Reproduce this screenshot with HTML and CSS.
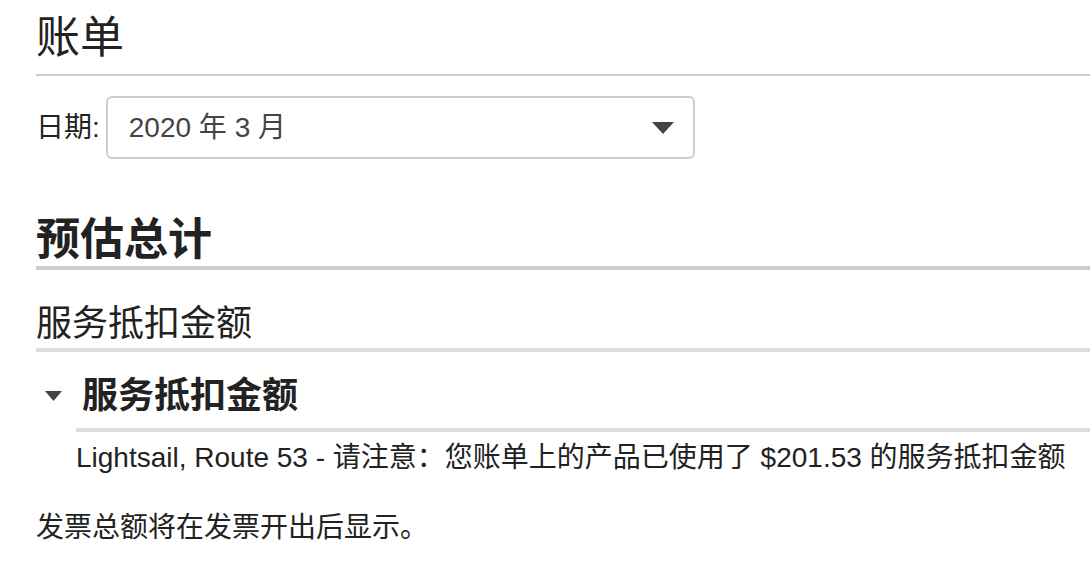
FILE: index.html
```html
<!DOCTYPE html>
<html lang="zh-CN">
<head>
  <meta charset="UTF-8">
  <meta name="viewport" content="width=device-width, initial-scale=1.0">
  <title>账单</title>
  <link rel="stylesheet" href="styles.css">
</head>
<body>
  <div class="page">
    <h1 class="page-title">账单</h1>

    <div class="date-row">
      <label class="date-label" for="period">日期:</label>
      <div class="select">
        <span class="select-value">2020 年 3 月</span>
        <svg class="select-arrow" width="22" height="12" viewBox="0 0 22 12">
          <polygon points="0,0 22,0 11,12" fill="#444"/>
        </svg>
      </div>
    </div>

    <h2 class="total-title">预估总计</h2>

    <h3 class="sub-title">服务抵扣金额</h3>

    <div class="expander">
      <div class="expander-head">
        <span class="caret">
          <svg width="17" height="10" viewBox="0 0 17 10">
            <polygon points="0,0 17,0 8.5,10" fill="#444"/>
          </svg>
        </span>
        <h4 class="expander-title">服务抵扣金额</h4>
      </div>
      <p class="expander-body">Lightsail, Route 53 - 请注意：您账单上的产品已使用了 $201.53 的服务抵扣金额</p>
    </div>

    <p class="note">发票总额将在发票开出后显示。</p>
  </div>
</body>
</html>
```

FILE: styles.css
```css
body {
  margin: 0;
  background: #fff;
  color: #222;
  font-family: "Liberation Sans", "Noto Sans CJK SC", sans-serif;
  font-size: 28px;
}
.page {
  padding: 12px 0 0 36px;
}
h1, h2, h3, h4, p {
  margin: 0;
}
.page-title {
  font-size: 44px;
  font-weight: normal;
  line-height: 52px;
  padding-bottom: 10px;
  border-bottom: 2px solid #ccc;
}
.date-row {
  display: flex;
  align-items: center;
  gap: 6px;
  margin-top: 20px;
}
.date-label {
  line-height: 36px;
}
.select {
  display: flex;
  align-items: center;
  justify-content: space-between;
  box-sizing: border-box;
  width: 589px;
  height: 63px;
  padding: 0 19px 0 21px;
  border: 2px solid #ccc;
  border-radius: 6px;
  color: #444;
}
.select-value {
  line-height: 36px;
}
.total-title {
  margin-top: 55px;
  font-size: 44px;
  font-weight: bold;
  line-height: 52px;
  border-bottom: 4px solid #ccc;
}
.sub-title {
  margin-top: 32px;
  font-size: 36px;
  font-weight: normal;
  line-height: 44px;
  padding-bottom: 2px;
  border-bottom: 4px solid #ddd;
}
.expander {
  margin-top: 22px;
}
.expander-head {
  display: flex;
}
.caret {
  display: flex;
  align-items: center;
  width: 40px;
  height: 44px;
  padding-left: 9px;
  box-sizing: border-box;
}
.expander-title {
  flex: 1;
  font-size: 36px;
  font-weight: bold;
  line-height: 44px;
  padding: 0 0 10px 6px;
  border-bottom: 4px solid #ddd;
}
.expander-body {
  margin: 8px 0 0 40px;
  line-height: 36px;
}
.note {
  margin-top: 34px;
  line-height: 36px;
}
```
